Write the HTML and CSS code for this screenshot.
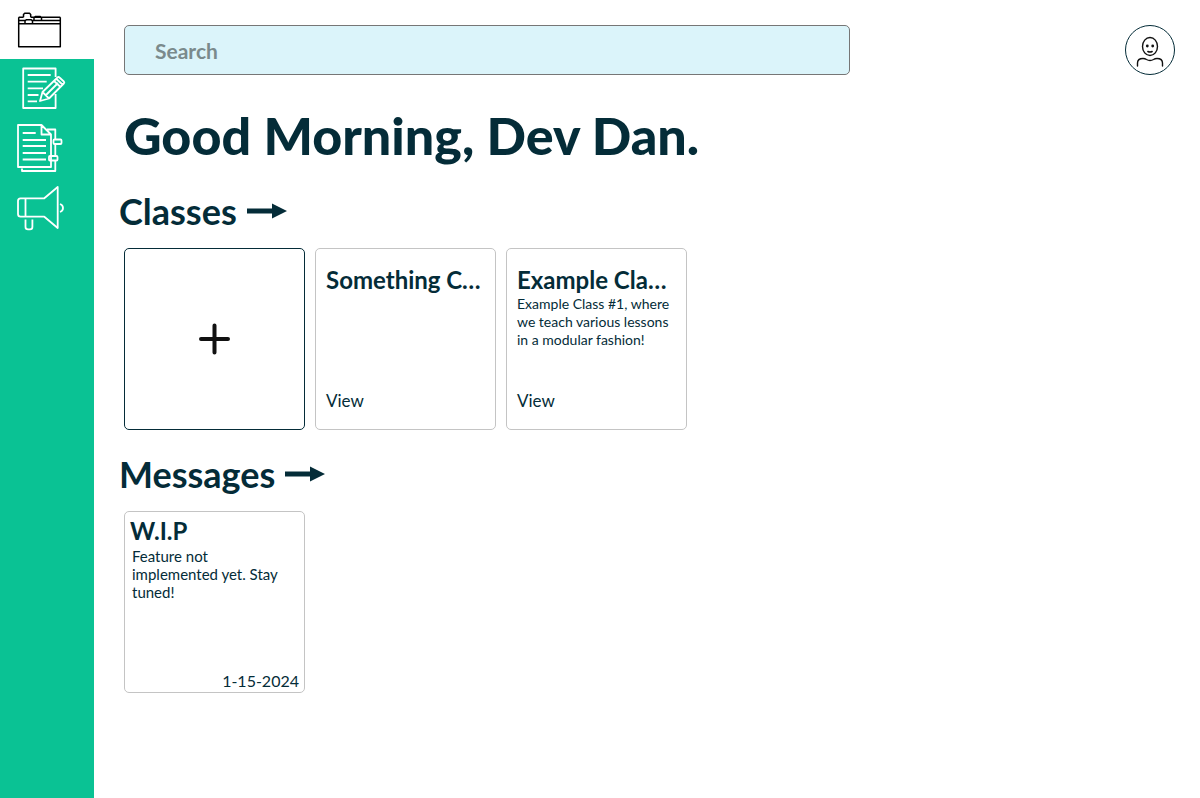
FILE: index.html
```html
<!DOCTYPE html>
<html lang="en">
<head>
<meta charset="utf-8">
<title>Dashboard</title>
<link rel="stylesheet" href="styles.css">
</head>
<body>
<div class="app">
  <nav class="sidebar" aria-label="Main">
    <a class="nav-item nav-item-active" href="#classes" aria-label="Classes">
      <svg class="nav-icon" viewBox="0 0 60 60" stroke-width="1.5">
        <path d="M8.700 17.200V46.700H50.300V17.200M8.700 17.200H13.500M20.700 17.200H50.300M8.700 20.500H15M22.500 20.500H50.300M8.700 23.800H50.300M13.500 17.200V14.500L14.700 13.200H19.500L20.700 14.500V17.200M24 20.500V17.800L25.200 16.500H30.300L31.500 17.800V20.500M15 23.800V21L16.200 19.700H21.300L22.500 21V23.800"/>
      </svg>
    </a>
    <a class="nav-item" href="#assignments" aria-label="Assignments">
      <svg class="nav-icon" viewBox="0 0 60 60" stroke-width="1.8">
        <path d="M45.600 18V9.500H13.200V49H45.600V35M17.700 16H40.700M17.700 22.700H36.700M17.700 29.300H33M17.700 36H28.500M17.700 42.300H27M30 42L32.500 33L47.500 18.500Q48.500 17.500 49.500 18.500L53.800 22.500Q54.800 23.500 53.800 24.500L39 39.500ZM32.500 33L39 39.500M36 36L48 24M43.500 21.500L50.500 28M46 19.500L53 26"/>
      </svg>
    </a>
    <a class="nav-item" href="#notes" aria-label="Notes">
      <svg class="nav-icon" viewBox="0 0 60 60" stroke-width="1.8">
        <path d="M31.500 6H8V48H41V15.500ZM31.500 6V15.500H41M37 10.500H45.300V20.500M45.300 25.500V37M45.300 41.500V52H12V49.500M12.700 14H25.700M12.700 21H36M12.700 27H36M12.700 34H36M12.700 40.500H36"/>
        <rect x="43.500" y="20.500" width="8" height="4.500" rx="1"/>
        <rect x="39" y="37" width="8.500" height="4.500" rx="1"/>
      </svg>
    </a>
    <a class="nav-item" href="#announcements" aria-label="Announcements">
      <svg class="nav-icon" viewBox="0 0 60 60" stroke-width="1.8">
        <path d="M34.300 19.300H10.500Q8 19.300 8 22V35Q8 37.700 10.500 37.700H34.300L47.700 49V8ZM15.500 19.300V37.700M15.500 40.500V48Q15.500 50.300 18 50.300H20Q22.400 50.300 22.400 48V40.500M50 25Q53 26 53 29Q53 32 50 33"/>
      </svg>
    </a>
  </nav>

  <div class="page">
    <header class="topbar">
      <input class="search" type="search" placeholder="Search" aria-label="Search">
      <button class="profile" type="button" aria-label="Profile">
        <svg class="profile-icon" viewBox="0 0 48 48">
          <ellipse cx="24" cy="20.500" rx="7.500" ry="9"/>
          <path d="M11.500 40V37Q11.500 32.500 17 32.500Q19 32.500 20.500 33.500Q24 35.500 27.500 33.500Q29 32.500 31 32.500Q36.500 32.500 36.500 37V40M21.800 25.500Q24 26.500 26.200 25.500"/>
          <circle class="eye" cx="21.300" cy="20" r="1.400"/>
          <circle class="eye" cx="26.700" cy="20" r="1.400"/>
        </svg>
      </button>
    </header>

    <main class="content">
      <h1 class="greeting">Good Morning, Dev Dan.</h1>

      <section class="section" id="classes">
        <h2 class="section-title"><a class="section-link" href="#classes">Classes
          <svg class="arrow" viewBox="0 0 40 16"><path d="M0 5.500H25V0.500L40 8L25 15.500V10.500H0Z"/></svg></a></h2>
        <div class="cards">
          <button class="card card-add" type="button" aria-label="Add class">
            <svg class="plus" viewBox="0 0 32 32"><path d="M15.500 2.500V29.500M2 16H29"/></svg>
          </button>
          <article class="card">
            <h3 class="card-title">Something Cool</h3>
            <a class="card-view" href="#something">View</a>
          </article>
          <article class="card">
            <h3 class="card-title">Example Class #1</h3>
            <p class="card-text">Example Class #1, where we teach various lessons in a modular fashion!</p>
            <a class="card-view" href="#example">View</a>
          </article>
        </div>
      </section>

      <section class="section" id="messages">
        <h2 class="section-title"><a class="section-link" href="#messages">Messages
          <svg class="arrow" viewBox="0 0 40 16"><path d="M0 5.500H25V0.500L40 8L25 15.500V10.500H0Z"/></svg></a></h2>
        <div class="cards">
          <article class="card message">
            <h3 class="message-title">W.I.P</h3>
            <p class="message-text">Feature not implemented yet. Stay tuned!</p>
            <time class="message-date" datetime="2024-01-15">1-15-2024</time>
          </article>
        </div>
      </section>
    </main>
  </div>
</div>
</body>
</html>
```
FILE: styles.css
```css
* {
  box-sizing: border-box;
}

body {
  margin: 0;
  background: #fff;
  color: #042c38;
  font-family: Lato, "Open Sans", sans-serif;
}

h1, h2, h3, p {
  margin: 0;
}

a {
  color: inherit;
  text-decoration: none;
}

.app {
  display: flex;
  min-height: 100vh;
}

.sidebar {
  flex: 0 0 94px;
  background: #0ac294;
}

.nav-item {
  display: block;
  height: 60px;
  padding-left: 10px;
  color: #fff;
}

.nav-item-active {
  height: 59px;
  background: #fff;
  color: #000;
}

.nav-icon {
  display: block;
  width: 60px;
  height: 60px;
  fill: none;
  stroke: currentColor;
  stroke-linejoin: round;
}

.page {
  flex: 1;
  min-width: 0;
  padding: 25px 25px 25px 30px;
}

.topbar {
  display: flex;
  align-items: center;
  justify-content: space-between;
}

.search {
  flex: 0 1 726px;
  min-width: 0;
  height: 50px;
  margin: 0;
  padding: 0 30px;
  border: 1px solid #767676;
  border-radius: 5px;
  background: #dbf4fa;
  color: #042c38;
  font: bold 21px Lato, "Open Sans", sans-serif;
  appearance: none;
}

.search::placeholder {
  color: #7a8a8c;
}

.profile {
  width: 50px;
  height: 50px;
  padding: 0;
  border: 1px solid #042c38;
  border-radius: 50%;
  background: #fff;
}

.profile-icon {
  display: block;
  width: 48px;
  height: 48px;
  fill: none;
  stroke: #111;
  stroke-width: 1.4;
  stroke-linecap: round;
}

.eye {
  fill: #111;
  stroke: none;
}

.greeting {
  margin-top: 28px;
  font-size: 52px;
  font-weight: 900;
  line-height: 64px;
}

.section {
  margin-top: 20px;
}

.section-title {
  margin-left: -5px;
  font-size: 36px;
  line-height: 48px;
}

.section-link {
  display: inline-flex;
  align-items: center;
  gap: 10px;
}

.arrow {
  width: 40px;
  height: 16px;
  fill: #042c38;
}

.cards {
  display: flex;
  flex-wrap: wrap;
  gap: 10px;
  margin-top: 13px;
}

.card {
  display: flex;
  flex-direction: column;
  width: 181px;
  height: 182px;
  padding: 16px 10px;
  border: 1px solid #c4c4c4;
  border-radius: 5px;
  background: #fff;
}

.card-add {
  align-items: center;
  justify-content: center;
  border-color: #042c38;
}

.plus {
  width: 32px;
  height: 32px;
  stroke: #111;
  stroke-width: 4;
  stroke-linecap: round;
}

.card-title {
  overflow: hidden;
  font-size: 24px;
  line-height: 30px;
  text-overflow: ellipsis;
  white-space: nowrap;
}

.card-text {
  font-size: 14px;
  line-height: 18px;
}

.card-view {
  margin-top: auto;
  font-size: 17px;
  line-height: 24px;
}

.message {
  padding: 4px 5px 0;
}

.message-title {
  font-size: 24px;
  line-height: 30px;
}

.message-text {
  margin-top: 1px;
  padding: 0 10px 0 2px;
  font-size: 15px;
  line-height: 18px;
}

.message-date {
  margin-top: auto;
  font-size: 16px;
  line-height: 22px;
  text-align: right;
}
```
